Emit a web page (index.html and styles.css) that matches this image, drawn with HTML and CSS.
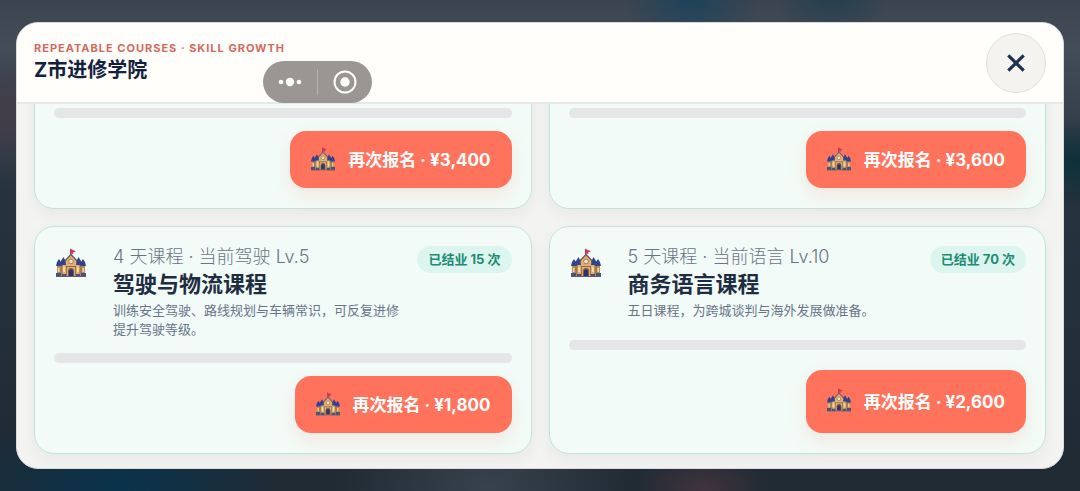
FILE: index.html
```
<!DOCTYPE html>
<html lang="zh-CN">
<head>
    <meta charset="UTF-8">
    <meta name="viewport" content="width=device-width, initial-scale=1.0">
    <title>Z市进修学院</title>
    <link rel="stylesheet" href="styles.css">
</head>
<body>
    <svg class="sprite" aria-hidden="true">
        <symbol id="castle" viewBox="0 0 30 30">
            <path d="M14.500 1v8" stroke="#59436b" stroke-width="1"/>
            <path d="M14 .5l6 3-3 1 .5 1.500-3.500-.5z" fill="#c8385c"/>
            <path d="M1 16h28v12H1z" fill="#b98d60"/>
            <path d="M7 15l8-9 8 9v13H7z" fill="#dfb077"/>
            <path d="M6.500 15.500L15 6.500l8.500 9" fill="none" stroke="#6e5a63" stroke-width="1.400"/>
            <path d="M0 18l1-4 2-3 2 3 1 4zM24 18l1-4 2-3 2 3 1 4zM4 17l1-4 2.500-4 2 4 .5 4zM20 17l.5-4 2-4 2.500 4 1 4z" fill="#33428a"/>
            <circle cx="15" cy="13.500" r="2.300" fill="#fbe6b4" stroke="#94664c" stroke-width=".8"/>
            <path d="M10 18.500h10" stroke="#94664c"/>
            <path d="M12 28v-5a3 3 0 0 1 6 0v5z" fill="#7d5440"/>
            <path d="M13 28v-4.500a2 2 0 0 1 4 0V28z" fill="#27366f"/>
            <path d="M7 19h2v5H7zM21 19h2v5h-2zM2 20h1.500v4H2zM26.500 20H28v4h-1.500z" fill="#ffd98a"/>
            <path d="M5 18v9M10.500 18v9M19.500 18v9M25 18v9" stroke="#80604f" stroke-width=".8"/>
            <path d="M0 25h5v4H0zM6 26h4.500v3H6zM19.500 26H24v3h-4.500zM25 25h5v4h-5z" fill="#455579"/>
            <path d="M0 28.500h30" stroke="#66586a"/>
        </symbol>
    </svg>

    <div class="overlay">
        <section class="modal">
            <header class="modal-header">
                <div>
                    <p class="eyebrow">REPEATABLE COURSES · SKILL GROWTH</p>
                    <h1>Z市进修学院</h1>
                </div>
                <button type="button" class="close" aria-label="关闭">
                    <svg viewBox="0 0 20 20"><path d="M3 3l14 14M17 3L3 17"/></svg>
                </button>
            </header>

            <div class="course-list">
                <article class="course course-partial">
                    <div class="bar"></div>
                    <button type="button" class="enroll"><svg><use href="#castle"/></svg>再次报名 · ¥3,400</button>
                </article>
                <article class="course course-partial">
                    <div class="bar"></div>
                    <button type="button" class="enroll"><svg><use href="#castle"/></svg>再次报名 · ¥3,600</button>
                </article>
                <article class="course">
                    <div class="course-head">
                        <svg class="course-icon"><use href="#castle"/></svg>
                        <div class="course-text">
                            <p class="meta">4 天课程 · 当前驾驶 Lv.5</p>
                            <h2>驾驶与物流课程</h2>
                            <p class="desc">训练安全驾驶、路线规划与车辆常识，可反复进修提升驾驶等级。</p>
                        </div>
                        <span class="badge">已结业 15 次</span>
                    </div>
                    <div class="bar"></div>
                    <button type="button" class="enroll"><svg><use href="#castle"/></svg>再次报名 · ¥1,800</button>
                </article>
                <article class="course">
                    <div class="course-head">
                        <svg class="course-icon"><use href="#castle"/></svg>
                        <div class="course-text">
                            <p class="meta">5 天课程 · 当前语言 Lv.10</p>
                            <h2>商务语言课程</h2>
                            <p class="desc">五日课程，为跨城谈判与海外发展做准备。</p>
                        </div>
                        <span class="badge">已结业 70 次</span>
                    </div>
                    <div class="bar"></div>
                    <button type="button" class="enroll"><svg><use href="#castle"/></svg>再次报名 · ¥2,600</button>
                </article>
            </div>
        </section>
    </div>

    <div class="capsule">
        <button type="button" aria-label="更多">
            <svg viewBox="0 0 24 24"><circle cx="3" cy="12" r="2.300"/><circle cx="12" cy="12" r="4.200"/><circle cx="21" cy="12" r="2.300"/></svg>
        </button>
        <button type="button" aria-label="退出">
            <svg viewBox="0 0 24 24"><circle class="ring" cx="12" cy="12" r="10.500"/><circle cx="12" cy="12" r="4.700"/></svg>
        </button>
    </div>
</body>
</html>
```

FILE: styles.css
```
* {
    box-sizing: border-box;
}
body {
    margin: 0;
    font-family: Inter, "Noto Sans CJK SC", sans-serif;
    color: #1e2d42;
    background:
        radial-gradient(ellipse at 11% 100%, #08334d 0, transparent 12%),
        radial-gradient(ellipse at 65% 100%, #41333f 0, transparent 7%),
        radial-gradient(ellipse at 100% 33%, #0c3038 0, transparent 10%),
        radial-gradient(ellipse at 0 23%, #423d49 0, transparent 12%),
        radial-gradient(ellipse at 64% 0, #1e435b 0, transparent 7%),
        radial-gradient(ellipse at 77% 0, #24404f 0, transparent 5%),
        radial-gradient(ellipse at 45% 100%, #38424e 0, transparent 18%),
        linear-gradient(#3c444f, #434d58 10%, #26323d 40%, #1f2a33);
}
h1, h2, p {
    margin: 0;
}
button {
    font: inherit;
    border: 0;
    cursor: pointer;
}
.sprite {
    position: absolute;
    width: 0;
    height: 0;
}
.overlay {
    display: flex;
    height: 100vh;
    padding: 22px 16px;
}
.modal {
    flex: 1;
    display: flex;
    flex-direction: column;
    overflow: hidden;
    border: 1px solid #d9dadb;
    border-radius: 22px;
    background: #f3f3f2;
}
.modal-header {
    display: flex;
    justify-content: space-between;
    align-items: center;
    padding: 10px 17px 9px;
    background: #fffefa;
    border-bottom: 2px solid #e8e8e6;
}
.eyebrow {
    font-size: 11px;
    line-height: 14px;
    font-weight: 700;
    letter-spacing: 1px;
    color: #d4685d;
}
h1 {
    font-size: 20px;
    line-height: 30px;
    color: #14213d;
}
.close {
    display: flex;
    align-items: center;
    justify-content: center;
    width: 60px;
    height: 60px;
    border: 1px solid #dededb;
    border-radius: 50%;
    background: #f4f3f0;
}
.close svg {
    width: 22px;
    height: 22px;
    fill: none;
    stroke: #1f3050;
    stroke-width: 3;
}

/* courses */
.course-list {
    flex: 1;
    min-height: 0;
    overflow: hidden;
    display: grid;
    grid-template-columns: 1fr 1fr;
    align-content: end;
    gap: 17px;
    padding: 0 17px 14px;
}
.course {
    display: grid;
    gap: 13px;
    min-width: 0;
    padding: 19px 19px 20px;
    border: 1px solid #c1e4d8;
    border-radius: 20px;
    background: #f2fbf7;
    box-shadow: 0 6px 16px rgba(30, 45, 66, 0.05);
}
.course-partial {
    height: 160px;
    align-content: end;
}
.course-head {
    display: grid;
    grid-template-columns: 47px 1fr auto;
    align-items: start;
    column-gap: 12px;
}
.course-icon {
    width: 30px;
    height: 30px;
    margin: 2px;
}
.meta {
    font-size: 18px;
    line-height: 22px;
    font-weight: 300;
    color: #687487;
}
h2 {
    font-size: 22px;
    line-height: 32px;
}
.desc {
    margin: 1px 0;
    font-size: 13px;
    line-height: 19px;
    color: #697488;
}
.badge {
    padding: 0 11px;
    border-radius: 14px;
    font-size: 13px;
    line-height: 27px;
    font-weight: 700;
    color: #218b75;
    background: #dcf5ee;
}
.bar {
    height: 10px;
    border-radius: 5px;
    background: #e4e6e7;
}
.enroll {
    justify-self: end;
    display: flex;
    align-items: center;
    gap: 13px;
    min-height: 57px;
    padding: 0 21px 2px;
    border-radius: 16px;
    font-size: 17px;
    font-weight: 700;
    color: #fff;
    background: #ff735c;
    box-shadow: 0 8px 18px rgba(255, 115, 92, 0.14);
}
.enroll svg {
    width: 24px;
    height: 24px;
}

/* floating capsule */
.capsule {
    position: absolute;
    top: 61px;
    left: 263px;
    display: flex;
    width: 109px;
    height: 42px;
    padding: 8px 0;
    border-radius: 21px;
    background: #999693;
}
.capsule button {
    flex: 1;
    display: flex;
    align-items: center;
    justify-content: center;
    padding: 0;
    background: none;
}
.capsule button + button {
    border-left: 1px solid #b5b3b0;
}
.capsule svg {
    width: 24px;
    height: 24px;
    fill: #fff;
}
.capsule .ring {
    fill: none;
    stroke: #fff;
    stroke-width: 2;
}
```
